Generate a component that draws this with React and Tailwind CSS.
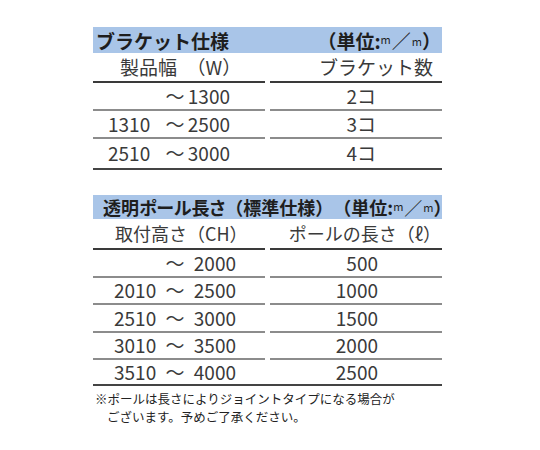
const jp = { fontFamily: '"Noto Sans CJK JP", "Noto Sans", sans-serif' }

const bracketRows = [
  { from: '', to: '1300', count: '2コ', h: 'h-[28px]' },
  { from: '1310', to: '2500', count: '3コ', h: 'h-[28px]' },
  { from: '2510', to: '3000', count: '4コ', h: 'h-[29px]' },
]

const poleRows = [
  { from: '', to: '2000', len: '500', h: 'h-[28px]' },
  { from: '2010', to: '2500', len: '1000', h: 'h-[27px]' },
  { from: '2510', to: '3000', len: '1500', h: 'h-[28px]' },
  { from: '3010', to: '3500', len: '2000', h: 'h-[27px]' },
  { from: '3510', to: '4000', len: '2500', h: 'h-[24px]' },
]

function Unit() {
  return (
    <span className="inline-flex items-center whitespace-nowrap">
      （単位:
      <span className="text-[11px] font-normal self-start leading-none mt-[3px]">m</span>
      <span className="font-normal mx-[1px]">／</span>
      <span className="text-[11px] font-normal self-end leading-none mb-[3px]">m</span>
      ）
    </span>
  )
}

function Cell({ last, children, className = '' }) {
  return (
    <div className={`flex items-center ${last ? '' : 'border-b-2 border-[#8c8c8c]'} ${className}`}>
      {children}
    </div>
  )
}

export default function App() {
  return (
    <div className="w-[540px] h-[450px] bg-white text-[#3a3a3a]" style={jp}>
      <div className="ml-[93px] w-[349px] pt-[27px]">
        {/* Bracket spec */}
        <div className="h-[26px] bg-[#a9c5e8] flex items-center justify-between pl-[3px] pr-[1px] text-[19px] font-bold text-[#1e1e1e] leading-none whitespace-nowrap">
          <span>ブラケット仕様</span>
          <Unit />
        </div>
        <div className="grid grid-cols-2 gap-x-[5px] border-b-2 border-[#444]">
          <div className="h-[30px] flex items-center pl-[27px] text-[19px] border-b-2 border-[#3a3a3a]">
            製品幅　（W）
          </div>
          <div className="h-[30px] flex items-center justify-end pr-[9px] text-[19px] border-b-2 border-[#3a3a3a]">
            ブラケット数
          </div>
          {bracketRows.map((r, i) => {
            const last = i === bracketRows.length - 1
            return [
              <Cell key={`l${i}`} last={last} className={`${r.h} pl-[15px] text-[19px]`}>
                <span className="w-[56px]">{r.from}</span>
                <span className="w-[22px] text-center">～</span>
                <span className="w-[44px] text-right">{r.to}</span>
              </Cell>,
              <Cell key={`r${i}`} last={last} className={`${r.h} justify-end pr-[66px] text-[19px]`}>
                {r.count}
              </Cell>,
            ]
          })}
        </div>

        {/* Pole length */}
        <div className="mt-[25px] h-[24px] bg-[#a9c5e8] flex items-center justify-between pl-[10px] pr-[1px] text-[18px] font-bold text-[#1e1e1e] leading-none whitespace-nowrap">
          <span className="[font-feature-settings:'palt']">透明ポール長さ</span>
          <span>（標準仕様）</span>
          <Unit />
        </div>
        <div className="grid grid-cols-2 gap-x-[5px] border-b-2 border-[#444]">
          <div className="h-[31px] flex items-center pl-[22px] text-[18px] border-b-2 border-[#3a3a3a]">
            取付高さ（CH）
          </div>
          <div className="h-[31px] flex items-center justify-end pr-[1px] text-[18px] border-b-2 border-[#3a3a3a]">
            ポールの長さ（ℓ）
          </div>
          {poleRows.map((r, i) => {
            const last = i === poleRows.length - 1
            return [
              <Cell key={`l${i}`} last={last} className={`${r.h} pl-[21px] text-[19px]`}>
                <span className="w-[48px]">{r.from}</span>
                <span className="w-[26px] text-center">～</span>
                <span className="w-[48px] text-right">{r.to}</span>
              </Cell>,
              <Cell key={`r${i}`} last={last} className={`${r.h} justify-end pr-[64px] text-[19px]`}>
                {r.len}
              </Cell>,
            ]
          })}
        </div>

        {/* Note */}
        <div className="mt-[4px] ml-[2px] text-[12.5px] leading-[18px] text-[#222] whitespace-nowrap">
          <p>※ポールは長さによりジョイントタイプになる場合が</p>
          <p className="pl-[12px]">ございます。予めご了承ください。</p>
        </div>
      </div>
    </div>
  )
}
